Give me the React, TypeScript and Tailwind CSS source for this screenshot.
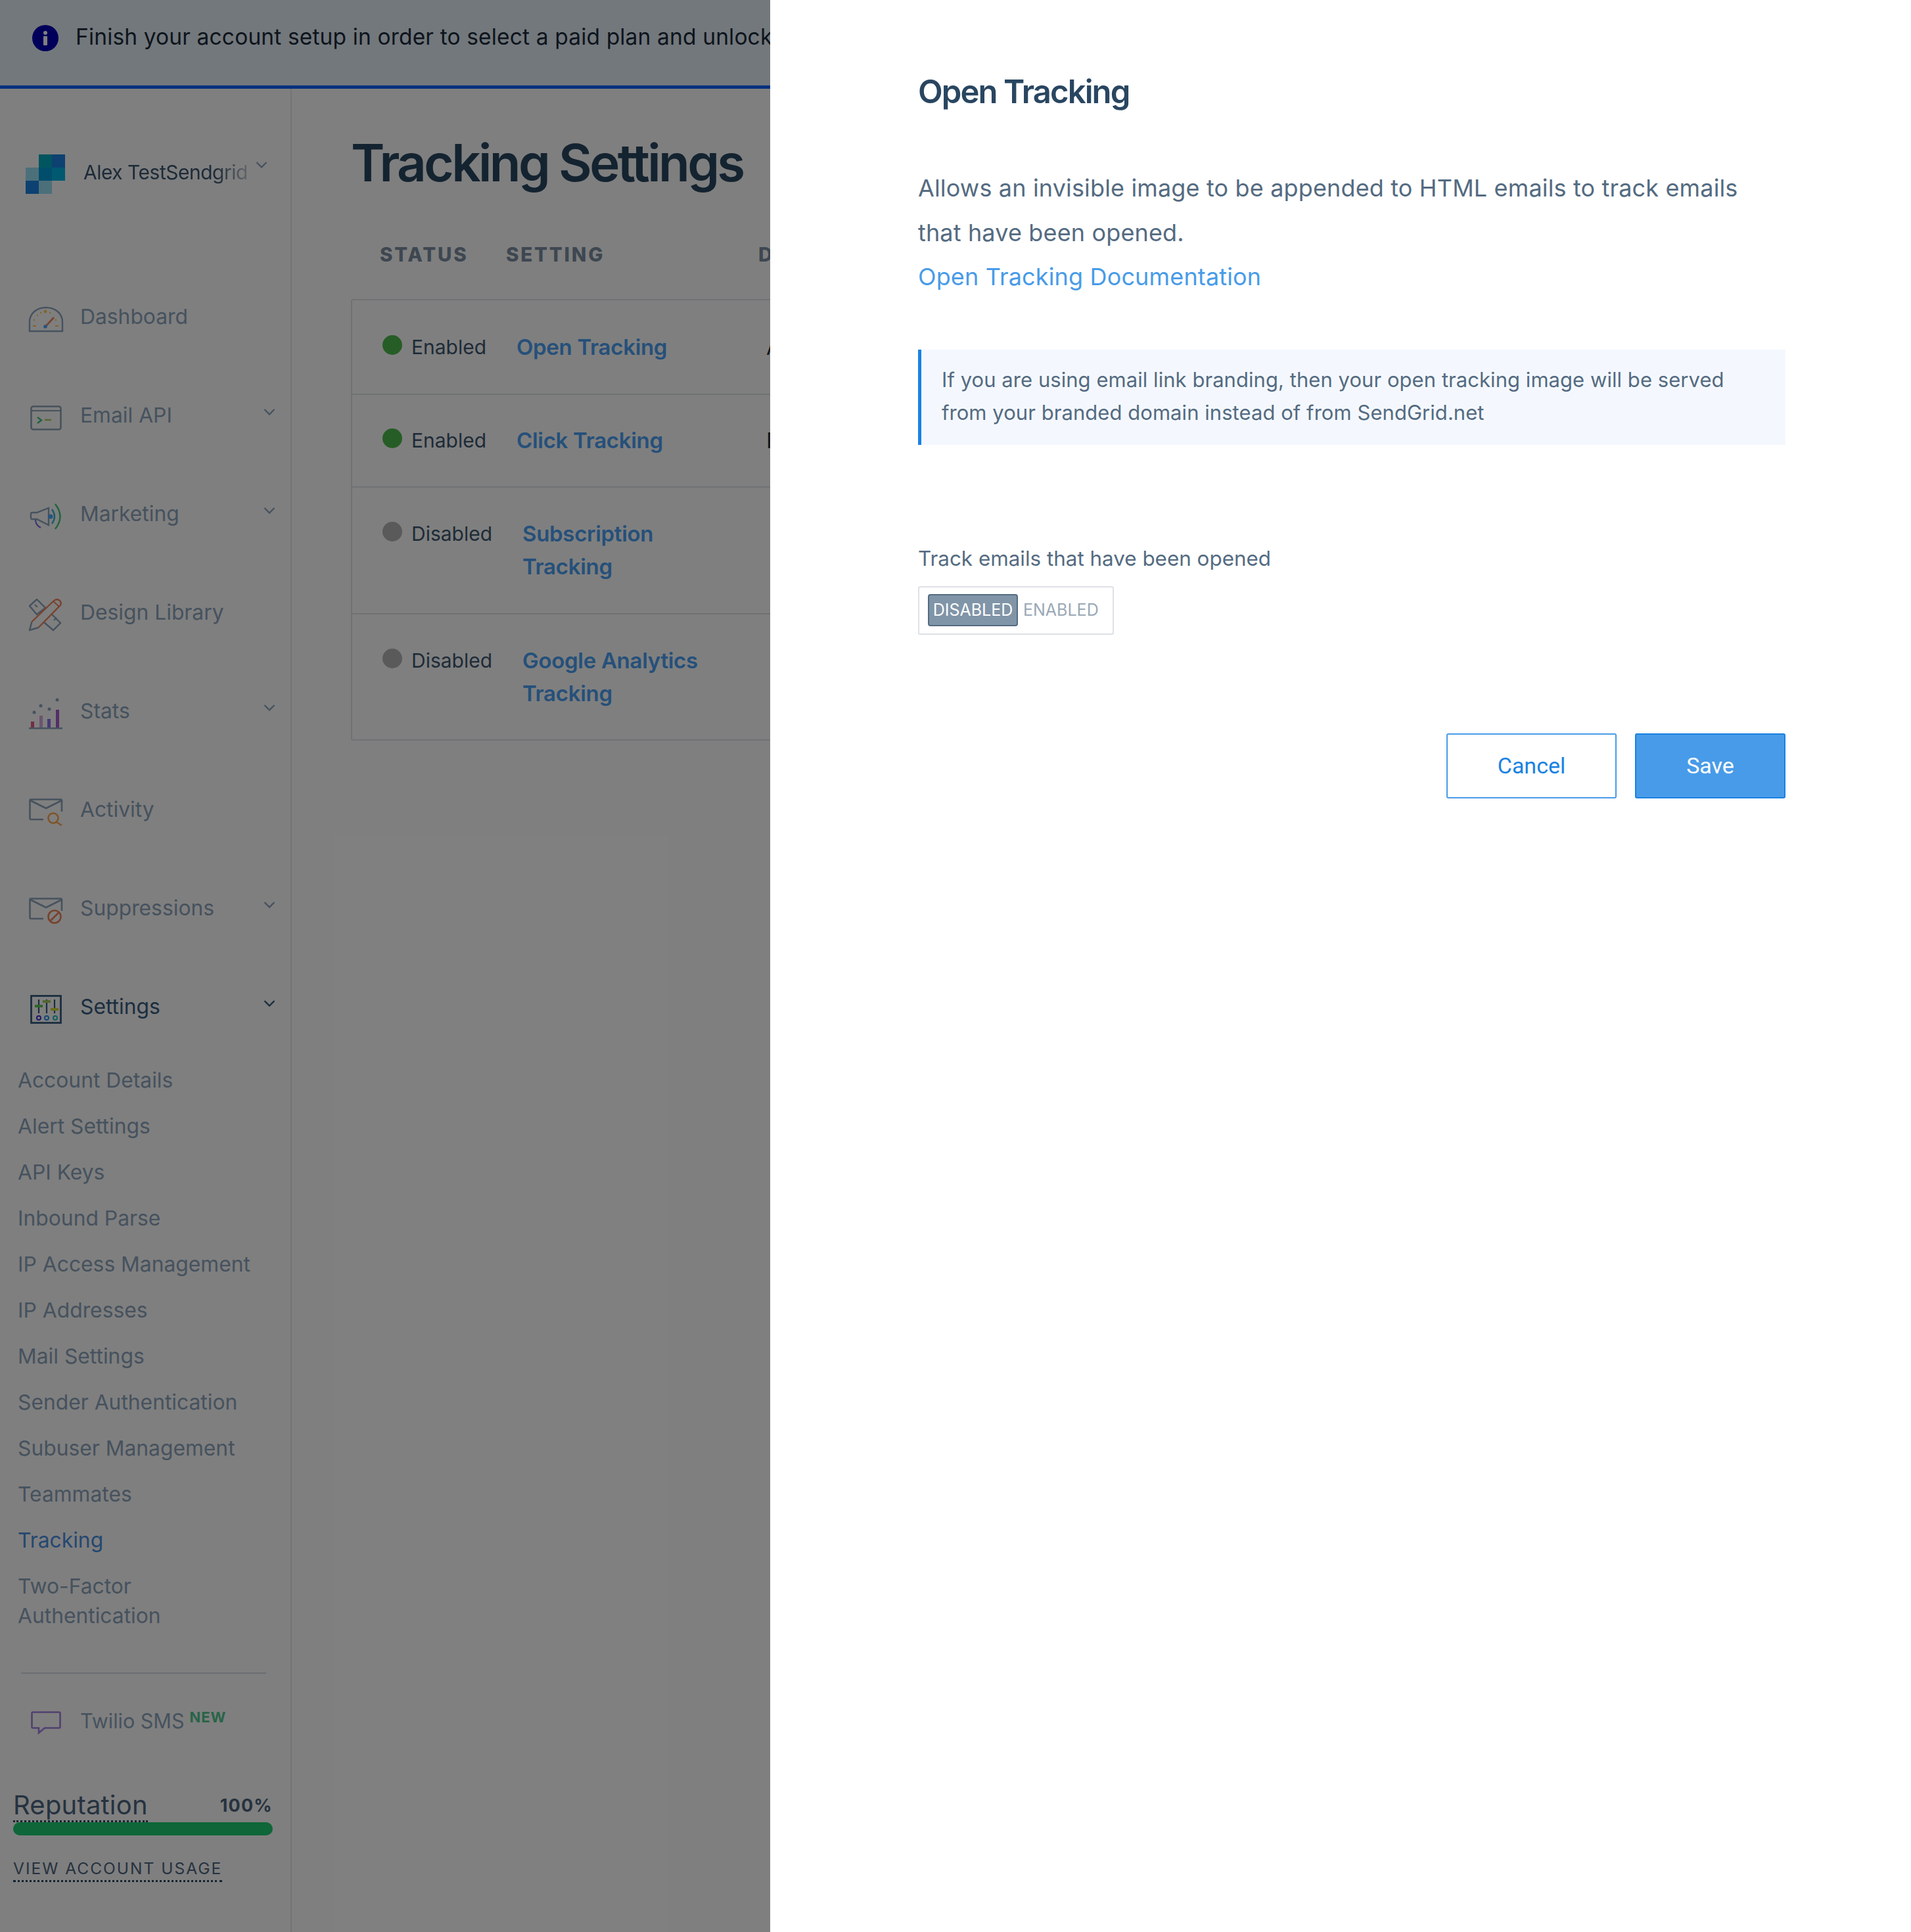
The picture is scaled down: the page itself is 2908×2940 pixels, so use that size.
import React from "react";

const font = { fontFamily: "Inter, 'Noto Sans', sans-serif" };

const Chevron = ({ color = "#8ca4bc" }: { color?: string }) => (
  <svg viewBox="0 0 18 12" className="w-[18px] h-[12px]" fill="none" stroke={color} strokeWidth="2.4">
    <path d="M1.5 2 L9 9.5 L16.5 2" />
  </svg>
);

const DashboardIcon = () => (
  <svg viewBox="0 0 54 40" className="w-[54px] h-[40px]" fill="none">
    <path d="M2 38 V24 C2 10 14 2 27 2 C40 2 52 10 52 24 V38 Z" stroke="#8ca4bc" strokeWidth="2.4" />
    <circle cx="26" cy="8" r="2.4" fill="#ffc857" />
    <circle cx="14" cy="14" r="1.2" fill="#ffc857" />
    <circle cx="9" cy="21" r="1.2" fill="#ffc857" />
    <circle cx="19" cy="10" r="1.2" fill="#ffc857" />
    <circle cx="33" cy="10" r="1.2" fill="#ffc857" />
    <circle cx="42" cy="21" r="1.2" fill="#ffc857" />
    <path d="M7 30 h5 M41 30 h5" stroke="#ffc857" strokeWidth="2" />
    <path d="M27 30 L39 17" stroke="#f2855c" strokeWidth="2.6" />
    <circle cx="26" cy="31" r="2.8" fill="#4aa8ff" />
  </svg>
);

const ApiIcon = () => (
  <svg viewBox="0 0 48 38" className="w-[48px] h-[38px]" fill="none">
    <rect x="1.5" y="1.5" width="45" height="35" rx="3" stroke="#8ca4bc" strokeWidth="2.6" />
    <path d="M1.5 8 H46.5" stroke="#8ca4bc" strokeWidth="2" />
    <path d="M11 18 L17 22.500 L11 27" stroke="#3fc878" strokeWidth="2.4" />
    <path d="M22 22 H32" stroke="#a6cc5a" strokeWidth="2.4" />
  </svg>
);

const MarketingIcon = () => (
  <svg viewBox="0 0 50 40" className="w-[50px] h-[40px]" fill="none">
    <path d="M29 7 V33 L11 24 H4 Q2 24 2 22 V16 Q2 14 4 14 H11 Z" stroke="#8ca4bc" strokeWidth="2.4" />
    <path d="M9 25 Q9 33 17 37" stroke="#7a6fe0" strokeWidth="2.2" />
    <circle cx="32" cy="20" r="3.500" fill="#4aa8ff" />
    <path d="M34 9 Q42 20 34 31" stroke="#36b8d8" strokeWidth="2.4" />
    <path d="M39 1 Q54 20 39 39" stroke="#3fc878" strokeWidth="2.4" />
  </svg>
);

const DesignIcon = () => (
  <svg viewBox="0 0 52 50" className="w-[52px] h-[50px]" fill="none">
    <path d="M1 11 L12 1 L25 14 L12 24 Z M35 24 L48 37 L37 48 L23 36" stroke="#8ca4bc" strokeWidth="2.4" />
    <path d="M9 9 L13 13 M38 33 L42 29" stroke="#8ca4bc" strokeWidth="2" />
    <path d="M4.500 35 L37 4 Q42 -1 47 3 Q51 8 46 12 L14.500 44" stroke="#f2855c" strokeWidth="2.400" />
    <path d="M37 4 L46 12" stroke="#f2855c" strokeWidth="2" />
    <path d="M4.500 35 L1 48 L14.500 44" stroke="#8ca4bc" strokeWidth="2.400" />
  </svg>
);

const StatsIcon = () => (
  <svg viewBox="0 0 52 48" className="w-[52px] h-[48px]">
    <rect x="3" y="36" width="5" height="10" fill="#e85a8c" />
    <rect x="16" y="27" width="5" height="19" fill="#d9a8e0" />
    <rect x="28" y="32" width="5" height="14" fill="#9070f0" />
    <rect x="41" y="18" width="5" height="28" fill="#a85cd0" />
    <rect x="0" y="45" width="51" height="2.500" fill="#8ca4bc" />
    <circle cx="8" cy="22" r="2.500" fill="#8ca4bc" />
    <circle cx="18" cy="12" r="2.500" fill="#8ca4bc" />
    <circle cx="31" cy="17" r="2.500" fill="#8ca4bc" />
    <circle cx="43" cy="3" r="2.500" fill="#8ca4bc" />
  </svg>
);

const ActivityIcon = () => (
  <svg viewBox="0 0 52 42" className="w-[52px] h-[42px]" fill="none">
    <path d="M22 32 H3 Q1.500 32 1.500 30 V3 Q1.500 1.500 3 1.500 H48 Q50 1.500 50 3 V20" stroke="#8ca4bc" strokeWidth="2.600" />
    <path d="M2 3 L26 15 L50 3" stroke="#8ca4bc" strokeWidth="2.600" />
    <circle cx="37" cy="30" r="7.500" stroke="#ffa94d" strokeWidth="2.600" />
    <path d="M42 36 L50 41" stroke="#ffa94d" strokeWidth="2.600" />
  </svg>
);

const SuppressionsIcon = () => (
  <svg viewBox="0 0 52 40" className="w-[52px] h-[40px]" fill="none">
    <path d="M22 32 H3 Q1.500 32 1.500 30 V3 Q1.500 1.500 3 1.500 H48 Q50 1.500 50 3 V20" stroke="#8ca4bc" strokeWidth="2.600" />
    <path d="M2 3 L26 15 L50 3" stroke="#8ca4bc" strokeWidth="2.600" />
    <circle cx="39" cy="29" r="9.500" stroke="#f2855c" strokeWidth="2.600" />
    <path d="M33 35 L45 23" stroke="#f2855c" strokeWidth="2.600" />
  </svg>
);

const SettingsIcon = () => (
  <svg viewBox="0 0 48 44" className="w-[48px] h-[44px]" fill="none">
    <rect x="1.500" y="1.500" width="45" height="41" stroke="#365c80" strokeWidth="2.800" />
    <path d="M13 7 V28 M25 7 V28 M37 7 V28" stroke="#365c80" strokeWidth="2.200" />
    <rect x="7" y="15" width="12" height="4" fill="#5ccc50" />
    <rect x="19" y="8" width="12" height="4" fill="#a6cc5a" />
    <rect x="31" y="20" width="12" height="4" fill="#d6d838" />
    <circle cx="13" cy="35" r="3" stroke="#3a30d0" strokeWidth="2" />
    <circle cx="25" cy="35" r="3" stroke="#2090f0" strokeWidth="2" />
    <circle cx="38" cy="35" r="3" stroke="#20c0c0" strokeWidth="2" />
  </svg>
);

const SmsIcon = () => (
  <svg viewBox="0 0 46 36" className="w-[46px] h-[36px]" fill="none">
    <path d="M3 1.500 H43 Q44.500 1.500 44.500 3 V24 Q44.500 25.500 43 25.500 H21 L12 33 V25.500 H3 Q1.500 25.500 1.500 24 V3 Q1.500 1.500 3 1.500 Z" stroke="#a080e0" strokeWidth="2.600" />
  </svg>
);

const navItems = [
  { label: "Dashboard", icon: <DashboardIcon />, arrow: false },
  { label: "Email API", icon: <ApiIcon />, arrow: true },
  { label: "Marketing", icon: <MarketingIcon />, arrow: true },
  { label: "Design Library", icon: <DesignIcon />, arrow: false },
  { label: "Stats", icon: <StatsIcon />, arrow: true },
  { label: "Activity", icon: <ActivityIcon />, arrow: false },
  { label: "Suppressions", icon: <SuppressionsIcon />, arrow: true },
  { label: "Settings", icon: <SettingsIcon />, arrow: true, active: true },
];

const subItems = [
  "Account Details",
  "Alert Settings",
  "API Keys",
  "Inbound Parse",
  "IP Access Management",
  "IP Addresses",
  "Mail Settings",
  "Sender Authentication",
  "Subuser Management",
  "Teammates",
  "Tracking",
  "Two-Factor Authentication",
];

const rows = [
  { on: true, setting: ["Open Tracking"], desc: "Allows an invisible image", h: "h-[142px] pt-[46px]" },
  { on: true, setting: ["Click Tracking"], desc: "Re-writes links", h: "h-[141px] pt-[44px]" },
  { on: false, setting: ["Subscription", "Tracking"], desc: "", h: "h-[193px] pt-[45px]" },
  { on: false, setting: ["Google Analytics", "Tracking"], desc: "", h: "h-[192px] pt-[45px]" },
];

function Sidebar() {
  return (
    <aside className="w-[444px] shrink-0 border-r-2 border-[#e6e8ea] flex flex-col">
      <div className="flex items-start mt-[100px] h-[60px] mb-[112px] pl-[39px]">
        <div className="grid grid-cols-3 grid-rows-3 w-[60px] h-[60px] shrink-0">
          <div />
          <div className="bg-[#00aabf]" />
          <div className="bg-[#1a82e2]" />
          <div className="bg-[#99e1f4]" />
          <div className="bg-[#009dd9]" />
          <div className="bg-[#00b2e3]" />
          <div className="bg-[#1a82e2]" />
          <div className="bg-[#99e1f4]" />
          <div />
        </div>
        <span className="ml-[28px] mt-[7px] text-[30px] leading-[40px] text-[#3c5670] tracking-[-0.5px] whitespace-nowrap w-[250px] [mask-image:linear-gradient(to_right,black_80%,transparent_108%)]">
          Alex TestSendgrid
        </span>
        <div className="ml-[12px] mt-[10px]">
          <Chevron />
        </div>
      </div>

      <nav className="flex flex-col">
        {navItems.map((item) => (
          <div key={item.label} className="h-[150px] flex items-center pl-[42px] relative">
            <div className="w-[56px] flex justify-center mt-[8px] shrink-0">{item.icon}</div>
            <span className={`ml-[24px] text-[31.800px] ${item.active ? "text-[#365c80]" : "text-[#8ca4bc]"}`}>{item.label}</span>
            {item.arrow && (
              <div className="absolute left-[401px] top-[64px]">
                <Chevron color={item.active ? "#365c80" : "#8ca4bc"} />
              </div>
            )}
          </div>
        ))}
      </nav>

      <ul className="flex flex-col gap-[25px] pt-[14px] pl-[27px] pr-[20px] text-[31.800px] leading-[45px] text-[#8ca4bc]">
        {subItems.map((s) => (
          <li key={s} className={s === "Tracking" ? "text-[#4a90e2]" : ""}>
            {s === "Two-Factor Authentication" ? (
              <>
                Two-Factor
                <br />
                Authentication
              </>
            ) : (
              s
            )}
          </li>
        ))}
      </ul>

      <div className="mt-[64px] mx-[32px] w-[373px] h-[2px] bg-[#d5dde5]" />

      <div className="mt-[50px] flex items-center pl-[42px] h-[44px]">
        <div className="w-[56px] flex justify-center mt-[6px] shrink-0">
          <SmsIcon />
        </div>
        <span className="ml-[24px] text-[30.500px] text-[#8ca4bc]">Twilio SMS</span>
        <span className="ml-[8px] mb-[12px] text-[22px] font-bold tracking-[1px] text-[#50c890]">NEW</span>
      </div>

      <div className="mt-[82px] ml-[20px] w-[395px]">
        <div className="flex items-end justify-between">
          <span className="text-[40px] leading-[47px] text-[#4d6580] border-b-[3px] border-dotted border-[#294661] tracking-[0.2px]">Reputation</span>
          <span className="text-[27px] leading-[44px] font-bold tracking-[1.2px] text-[#4d6580] pb-[3px]">100%</span>
        </div>
        <div className="h-[20px] rounded-full bg-[#1ccc72]" />
      </div>

      <div className="mt-[33px] ml-[20px]">
        <span className="text-[24.500px] leading-[35px] tracking-[2px] text-[#4d6580] border-b-[3px] border-dotted border-[#294661] inline-block whitespace-nowrap">
          VIEW ACCOUNT USAGE
        </span>
      </div>
    </aside>
  );
}

function TrackingTable() {
  return (
    <main className="flex-1 pl-[90px] min-w-0">
      <h1 className="mt-[67px] text-[78px] leading-[92px] font-semibold tracking-[-3.600px] text-[#294661] whitespace-nowrap">Tracking Settings</h1>
      <div className="mt-[73px] flex items-center h-[40px] pl-[44px] text-[29.500px] font-extrabold tracking-[2.800px] text-[#7c8fa3]">
        <span className="w-[192px]">STATUS</span>
        <span className="w-[384px]">SETTING</span>
        <span>DESCRIPTION</span>
      </div>
      <div className="mt-[48px] border-2 border-[#e0e3e6] rounded-[3px] w-[1400px]">
        {rows.map((r, i) => (
          <div key={i} className={`flex items-start pl-[44px] ${r.h} ${i > 0 ? "border-t-2 border-[#e0e3e6]" : ""}`}>
            <span className={`w-[30px] h-[30px] ml-[2px] rounded-full mt-[7px] shrink-0 ${r.on ? "bg-[#4cba4c]" : "bg-[#b4b4b4]"}`} />
            <span className="ml-[14px] text-[30px] leading-[50px] text-[#3c5670] w-[160px] shrink-0">{r.on ? "Enabled" : "Disabled"}</span>
            <div className={`text-[33px] leading-[50px] font-semibold text-[#4aa0f5] tracking-[-0.3px] shrink-0 ${r.on ? "w-[380px]" : "ml-[9px] w-[371px]"}`}>
              {r.setting.map((l) => (
                <div key={l}>{l}</div>
              ))}
            </div>
            <span className="text-[33px] leading-[50px] text-[#263238] whitespace-nowrap">{r.desc}</span>
          </div>
        ))}
      </div>
    </main>
  );
}

function DetailPanel() {
  return (
    <div className="absolute top-0 right-0 bottom-0 w-[1736px] bg-white pl-[225px] pr-[191px] pt-[103px]">
      <h2 className="text-[49px] leading-[74px] font-semibold tracking-[-1.900px] text-[#294661]">Open Tracking</h2>
      <p className="mt-[76px] text-[36px] leading-[67.500px] tracking-[0.15px] text-[#546b81]">
        Allows an invisible image to be appended to HTML emails to track emails
        <br />
        that have been opened.
        <br />
        <a className="text-[#489be8]">Open Tracking Documentation</a>
      </p>
      <div className="mt-[76px] h-[145px] border-l-[5px] border-[#1a82e2] bg-[#f4f8fe] pl-[31px] pt-[21px] text-[31px] leading-[50px] tracking-[0.05px] text-[#546b81]">
        If you are using email link branding, then your open tracking image will be served
        <br />
        from your branded domain instead of from SendGrid.net
      </div>
      <div className="mt-[148px] text-[31.400px] leading-[50px] text-[#546b81]">Track emails that have been opened</div>
      <div className="mt-[17px] w-[298px] h-[74px] border-2 border-[#dde1e6] rounded-[3px] flex items-center pl-[13px] text-[25px]">
        <span className="h-[49px] w-[137px] flex items-center justify-center rounded-[4px] border-2 border-[#546b81] bg-[#8195a8] text-white">DISABLED</span>
        <span className="ml-[8px] text-[#9aa8b5]">ENABLED</span>
      </div>
      <div className="mt-[150px] flex justify-end gap-[28px] text-[34px]" style={{ fontFamily: "Roboto, sans-serif" }}>
        <button className="w-[259px] h-[99px] border-2 border-[#489be8] rounded-[3px] bg-white text-[#1a82e2]">Cancel</button>
        <button className="w-[229px] h-[99px] border-2 border-[#1a82e2] rounded-[3px] bg-[#489be8] text-white">Save</button>
      </div>
    </div>
  );
}

export default function App() {
  return (
    <div className="relative w-[2908px] h-[2940px] overflow-hidden bg-white flex flex-col" style={font}>
      <div className="h-[135px] shrink-0 border-b-[5px] border-[#0060ff] bg-[#e6f0f8] flex items-center pl-[49px] pb-[17px]">
        <svg viewBox="0 0 40 40" className="w-[40px] h-[40px] shrink-0 mt-[3px]">
          <circle cx="20" cy="20" r="20" fill="#0000b4" />
          <circle cx="20" cy="12" r="3" fill="#fff" />
          <rect x="17" y="17" width="6" height="14" rx="1" fill="#fff" />
        </svg>
        <span className="ml-[26px] text-[33.500px] tracking-[0.15px] text-[#1a2a3a] whitespace-nowrap">
          Finish your account setup in order to select a paid plan and unlock all features
        </span>
      </div>
      <div className="flex flex-1 min-h-0">
        <Sidebar />
        <TrackingTable />
      </div>
      <div className="absolute inset-0 bg-black/50" />
      <DetailPanel />
    </div>
  );
}
